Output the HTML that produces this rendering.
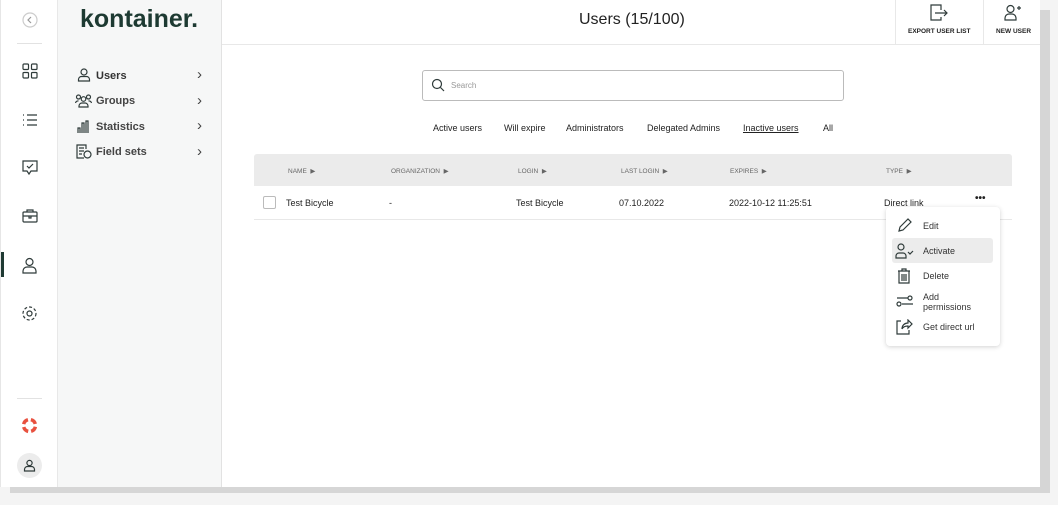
<!DOCTYPE html><html><head><style>
*{box-sizing:border-box;margin:0;padding:0}
body{width:1058px;height:505px;background:#f4f4f4;font-family:"Liberation Sans",sans-serif;position:relative;overflow:hidden;color:#222}
.shadow{position:absolute;left:10px;top:10px;width:1040px;height:483px;background:#d6d6d6}
.app{position:absolute;left:0;top:0;width:1040px;height:487px;background:#fff;border-left:1px solid #e6e6e6}
.rail{position:absolute;left:0;top:0;width:57px;height:487px;background:#fff;border-right:1px solid #e8e8e8}
.side{position:absolute;left:57px;top:0;width:164px;height:487px;background:#f6f7f7;border-right:1px solid #e2e2e2}
.main{position:absolute;left:221px;top:0;right:0;height:487px}
.ic{position:absolute;stroke:#2f3b3a;fill:none;stroke-width:1.2}
.nav{position:absolute;left:17px;font-size:11px;font-weight:bold;color:#333}
.chev{position:absolute;left:139px;font-size:15px;color:#444;line-height:12px}
.t{position:absolute;font-size:9px;color:#222;white-space:nowrap}
.h{position:absolute;font-size:6.5px;color:#666;top:167px}
.m{position:absolute;left:922px;font-size:9px;color:#333}
</style></head><body>
<div class="shadow"></div>
<div class="app">
<div class="rail">
<svg class="ic" style="left:21px;top:12px" width="16" height="16"><circle cx="8" cy="8" r="7" stroke="#ccc"/><path d="M9 5 6 8l3 3" stroke="#999"/></svg>
<div style="position:absolute;left:16px;top:43px;width:25px;height:1px;background:#e2e2e2"></div>
<svg class="ic" style="left:21px;top:63px" width="16" height="16"><rect x="1" y="1" width="5.5" height="5.5" rx="1"/><rect x="9.5" y="1" width="5.5" height="5.5" rx="1"/><rect x="1" y="9.5" width="5.5" height="5.5" rx="1"/><rect x="9.5" y="9.5" width="5.5" height="5.5" rx="1"/></svg>
<svg class="ic" style="left:21px;top:112px" width="16" height="16"><path d="M5 3h10M5 8h10M5 13h10M1 3h1M1 8h1M1 13h1"/></svg>
<svg class="ic" style="left:21px;top:160px" width="16" height="16"><path d="M1 1h14v10H9l-2 3-2-3H1z M5 6l2 2 4-4"/></svg>
<svg class="ic" style="left:21px;top:208px" width="16" height="16"><rect x="1" y="4" width="14" height="10" rx="1"/><path d="M5 4V2h6v2M1 8h14M7 8v2h2V8"/></svg>
<div style="position:absolute;left:0;top:252px;width:3px;height:25px;background:#1f3a33"></div>
<svg class="ic" style="left:20px;top:257px" width="17" height="17"><circle cx="8.5" cy="5" r="3.5"/><path d="M2 16v-2a4 4 0 0 1 4-4h5a4 4 0 0 1 4 4v2z"/></svg>
<svg class="ic" style="left:20px;top:305px" width="17" height="17"><circle cx="8.5" cy="8.5" r="2.5"/><circle cx="8.5" cy="8.5" r="6.5" stroke-dasharray="3 2"/></svg>
<div style="position:absolute;left:16px;top:398px;width:25px;height:1px;background:#e2e2e2"></div>
<svg style="position:absolute;left:20px;top:417px" width="17" height="17"><circle cx="8.5" cy="8.5" r="6" fill="none" stroke="#e8513f" stroke-width="3.5" stroke-dasharray="6.4 3" stroke-dashoffset="-1.3"/></svg>
<div style="position:absolute;left:16px;top:453px;width:25px;height:25px;border-radius:50%;background:#ececec"></div>
<svg class="ic" style="left:22px;top:459px" width="13" height="13"><circle cx="6.5" cy="4" r="2.6"/><path d="M1.5 12v-1.5a3 3 0 0 1 3-3h4a3 3 0 0 1 3 3V12z"/></svg>
</div>
<div class="side">
<div style="position:absolute;left:22px;top:5px;font-size:25px;font-weight:bold;color:#1d3a32;letter-spacing:0px">kontainer.</div>
<svg class="ic" style="left:19px;top:68px" width="14" height="14"><circle cx="7" cy="4" r="3"/><path d="M1.5 13v-1.5a3 3 0 0 1 3-3h5a3 3 0 0 1 3 3V13z"/></svg>
<div class="nav" style="left:38px;top:70px">Users</div><div class="chev" style="top:69px">›</div>
<svg class="ic" style="left:17px;top:94px" width="17" height="14"><circle cx="3.5" cy="3" r="2"/><circle cx="13.5" cy="3" r="2"/><circle cx="8.5" cy="5" r="2.3"/><path d="M4 13v-1a3 3 0 0 1 3-3h3a3 3 0 0 1 3 3v1zM0.5 9a2.5 2.5 0 0 1 3-2M16.5 9a2.5 2.5 0 0 0-3-2"/></svg>
<div class="nav" style="left:38px;top:95px;color:#444">Groups</div><div class="chev" style="top:95px">›</div>
<svg class="ic" style="left:19px;top:120px" width="14" height="13"><path d="M1 13V8h2v5M5 13V3h2v10M9 13V1h2v12"/></svg>
<div class="nav" style="left:38px;top:121px;color:#444">Statistics</div><div class="chev" style="top:120px">›</div>
<svg class="ic" style="left:18px;top:144px" width="16" height="15"><path d="M10 5V1H1v13h7M3 4h5M3 7h5M3 10h3"/><circle cx="11.5" cy="10.5" r="3.5"/></svg>
<div class="nav" style="left:38px;top:146px;color:#444">Field sets</div><div class="chev" style="top:146px">›</div>
</div>
<div class="main">
<div style="position:absolute;left:0;right:0;top:44px;height:1px;background:#e8e8e8"></div>
<div style="position:absolute;left:357px;top:11px;font-size:16px;color:#222">Users (15/100)</div>
<div style="position:absolute;left:673px;top:0;width:1px;height:44px;background:#e8e8e8"></div>
<div style="position:absolute;left:761px;top:0;width:1px;height:44px;background:#e8e8e8"></div>
<svg class="ic" style="left:708px;top:4px" width="18" height="18"><path d="M11 6V1H1v15h10v-3M5 9h12M14 6l3 3-3 3"/></svg>
<div style="position:absolute;left:686px;top:28px;font-size:6.5px;font-weight:bold;color:#222">EXPORT USER LIST</div>
<svg class="ic" style="left:782px;top:4px" width="18" height="18"><circle cx="6.5" cy="5" r="3.5"/><path d="M1 16v-2a4 4 0 0 1 4-4h3a4 4 0 0 1 4 4v2zM13 4h4M15 2v4"/></svg>
<div style="position:absolute;left:774px;top:28px;font-size:6.5px;font-weight:bold;color:#222">NEW USER</div>
<div style="position:absolute;left:200px;top:70px;width:422px;height:31px;border:1px solid #bbb;border-radius:3px"></div>
<svg class="ic" style="left:209px;top:78px" width="14" height="14"><circle cx="6" cy="6" r="4.5"/><path d="M9.5 9.5 13 13"/></svg>
<div style="position:absolute;left:229px;top:81px;font-size:8px;color:#999">Search</div>
<div class="t" style="left:211px;top:123px">Active users</div>
<div class="t" style="left:282px;top:123px">Will expire</div>
<div class="t" style="left:344px;top:123px">Administrators</div>
<div class="t" style="left:425px;top:123px">Delegated Admins</div>
<div class="t" style="left:521px;top:123px;text-decoration:underline">Inactive users</div>
<div class="t" style="left:601px;top:123px">All</div>
<div style="position:absolute;left:32px;top:154px;width:758px;height:32px;background:#ebebeb;border-radius:3px 3px 0 0"></div>
<div class="h" style="left:66px">NAME &nbsp;▶</div>
<div class="h" style="left:169px">ORGANIZATION &nbsp;▶</div>
<div class="h" style="left:296px">LOGIN &nbsp;▶</div>
<div class="h" style="left:399px">LAST LOGIN &nbsp;▶</div>
<div class="h" style="left:508px">EXPIRES &nbsp;▶</div>
<div class="h" style="left:664px">TYPE &nbsp;▶</div>
<div style="position:absolute;left:41px;top:196px;width:13px;height:13px;border:1px solid #bbb;border-radius:2px"></div>
<div class="t" style="left:64px;top:198px">Test Bicycle</div>
<div class="t" style="left:167px;top:198px">-</div>
<div class="t" style="left:294px;top:198px">Test Bicycle</div>
<div class="t" style="left:397px;top:198px">07.10.2022</div>
<div class="t" style="left:507px;top:198px">2022-10-12 11:25:51</div>
<div class="t" style="left:662px;top:198px">Direct link</div>
<div class="t" style="left:753px;top:193px;font-weight:bold;font-size:10px">•••</div>
<div style="position:absolute;left:32px;top:219px;width:758px;height:1px;background:#e8e8e8"></div>
</div>
<div style="position:absolute;left:885px;top:207px;width:114px;height:139px;background:#fff;border-radius:4px;box-shadow:0 1px 5px rgba(0,0,0,.18)">
<div style="position:absolute;left:6px;top:31px;width:101px;height:25px;background:#ececec;border-radius:3px"></div>
</div>
<svg class="ic" style="left:896px;top:217px" width="16" height="16"><path d="M2 14l1-4 8-8 3 3-8 8z"/></svg>
<div class="m" style="top:221px">Edit</div>
<svg class="ic" style="left:894px;top:243px" width="20" height="16"><circle cx="6" cy="4" r="3"/><path d="M1 15v-2a3 3 0 0 1 3-3h4a3 3 0 0 1 3 3v2zM13 9l2 2 3-3"/></svg>
<div class="m" style="top:246px">Activate</div>
<svg class="ic" style="left:896px;top:268px" width="14" height="16"><path d="M1 3h12M5 3V1h4v2M2 3v12h10V3M5 6v7M7 6v7M9 6v7"/></svg>
<div class="m" style="top:271px">Delete</div>
<svg class="ic" style="left:895px;top:294px" width="18" height="14"><path d="M1 4h11M6 10h11"/><circle cx="14" cy="4" r="2"/><circle cx="3" cy="10" r="2"/></svg>
<div class="m" style="top:292px;line-height:10px">Add<br>permissions</div>
<svg class="ic" style="left:895px;top:319px" width="17" height="16"><path d="M5 2H1v13h12v-4M6 10c0-4 3-6 6-6V1l4 4-4 4V7c-3 0-5 1-6 3"/></svg>
<div class="m" style="top:322px">Get direct url</div>
</div>
</body></html>
